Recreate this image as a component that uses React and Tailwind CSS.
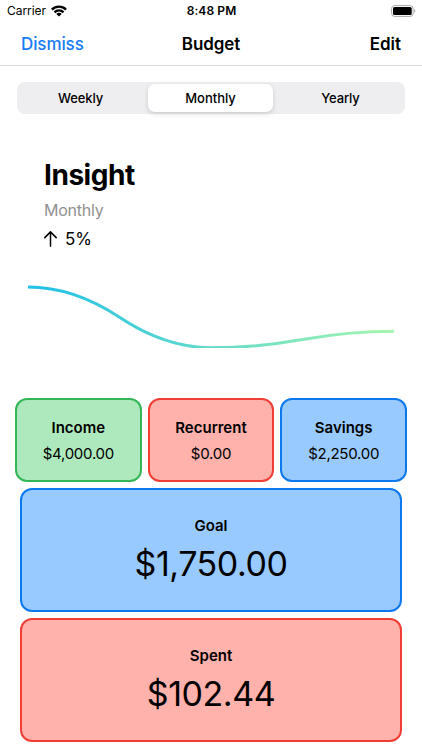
import React, { useState } from 'react';

const periods = ['Weekly', 'Monthly', 'Yearly'];

const colors = {
  green: 'bg-[#aee9bd] border-[#34b556]',
  red: 'bg-[#ffb1ab] border-[#f03e35]',
  blue: 'bg-[#99caff] border-[#0b78ee]',
};

const summary = [
  { title: 'Income', amount: '$4,000.00', color: 'green' },
  { title: 'Recurrent', amount: '$0.00', color: 'red' },
  { title: 'Savings', amount: '$2,250.00', color: 'blue' },
];

const totals = [
  { title: 'Goal', amount: '$1,750.00', color: 'blue' },
  { title: 'Spent', amount: '$102.44', color: 'red' },
];

function StatusBar() {
  return (
    <div className="grid grid-cols-3 items-center h-[22px] pl-[7px] pr-[6px] text-[12px] leading-[22px]">
      <div className="flex items-center gap-[5px]">
        <span className="tracking-[-0.05px]">Carrier</span>
        <svg width="16" height="12" viewBox="0 0 16 12" fill="none" stroke="#000" strokeWidth="2.4">
          <path d="M.9 4.6a10 10 0 0 1 14.2 0" />
          <path d="M3.5 7.3a6.3 6.3 0 0 1 9 0" />
          <path d="M5.3 8.9a3.7 3.7 0 0 1 5.4 0L8 11.6z" fill="#000" stroke="none" />
        </svg>
      </div>
      <span className="text-center font-semibold tracking-[0.1px]">8:48 PM</span>
      <svg className="justify-self-end" width="25" height="12" viewBox="0 0 25 12">
        <rect x="0.6" y="0.6" width="21.5" height="10.8" rx="3" fill="#fff" stroke="#a6a6a6" />
        <rect x="2" y="2" width="18.7" height="8" rx="1.6" fill="#000" />
        <path d="M23.2 4.2v3.6c.8-.3 1.2-1 1.2-1.8s-.4-1.5-1.2-1.8z" fill="#a6a6a6" />
      </svg>
    </div>
  );
}

function Segmented({ value, onChange }) {
  return (
    <div className="mx-[17px] mt-4 grid grid-cols-[127px_125px_127px] justify-center gap-1 h-8 py-[2px] pr-px rounded-lg bg-[#eeeef0]">
      {periods.map(p => (
        <button key={p} onClick={() => onChange(p)}
          className={`rounded-[7px] pt-px text-[13px] font-medium ${value === p ? 'bg-white shadow-[0_2px_5px_rgba(0,0,0,0.14)]' : 'tracking-[-0.1px]'}`}>
          {p}
        </button>
      ))}
    </div>
  );
}

function InsightChart() {
  return (
    <svg className="block ml-7 mt-[29px]" width="366" height="68" viewBox="28 280 366 68" fill="none">
      <defs>
        <linearGradient id="line" gradientUnits="userSpaceOnUse" x1="28" y1="0" x2="394" y2="0">
          <stop offset="0" stopColor="#20c0e8" />
          <stop offset="1" stopColor="#a8f5ae" />
        </linearGradient>
      </defs>
      <path d="M28 287Q74 287 119.5 317.3T211 347.8Q257 347.8 302.5 339.6T394 331.3" stroke="url(#line)" strokeWidth="3" />
    </svg>
  );
}

export default function App() {
  const [period, setPeriod] = useState('Monthly');

  return (
    <div className="w-[422px] h-[750px] overflow-hidden bg-white text-black font-['Inter',sans-serif]">
      <StatusBar />
      <div className="grid grid-cols-3 items-center h-11 px-[21px] pt-[2px] border-b border-[#dedede] text-[17px]">
        <button className="text-left font-medium tracking-[-0.1px] text-[#167bf5]">Dismiss</button>
        <h1 className="text-center font-semibold tracking-[-0.1px]">Budget</h1>
        <button className="text-right font-semibold">Edit</button>
      </div>

      <Segmented value={period} onChange={setPeriod} />

      <div className="ml-11 mt-[42px]">
        <h2 className="text-[28px] leading-[38px] font-bold tracking-[-0.45px]">Insight</h2>
        <p className="mt-[5px] text-[16px] leading-[22px] tracking-[-0.25px] text-[#919191]">{period}</p>
        <div className="mt-[7px] flex items-center gap-2 text-[17px] leading-[23px] tracking-[-0.2px]">
          <svg className="-mt-px" width="13" height="16" viewBox="0 0 13 16" fill="none" stroke="#000" strokeWidth="1.5" strokeLinecap="round" strokeLinejoin="round">
            <path d="M6.5 15.2V.9M.8 6.6 6.5.9l5.7 5.7" />
          </svg>
          <span>5%</span>
        </div>
      </div>

      <InsightChart />

      <div className="mt-[50px] mx-[15px] grid grid-cols-3 gap-[6px]">
        {summary.map(s => (
          <div key={s.title} className={`h-[84px] rounded-xl border-2 pt-4 text-center ${colors[s.color]}`}>
            <h3 className="text-[15px] leading-6 font-semibold">{s.title}</h3>
            <p className="mt-[2px] text-[15px] leading-6 tracking-[-0.25px]">{s.amount}</p>
          </div>
        ))}
      </div>

      <div className="mt-[6px] mx-5 flex flex-col gap-[6px]">
        {totals.map(t => (
          <div key={t.title} className={`h-[124px] rounded-xl border-2 pt-6 text-center ${colors[t.color]}`}>
            <h3 className="text-[15px] leading-6 font-semibold">{t.title}</h3>
            <p className="mt-[3px] text-[34px] leading-[46px] tracking-[-0.45px]">{t.amount}</p>
          </div>
        ))}
      </div>
    </div>
  );
}
